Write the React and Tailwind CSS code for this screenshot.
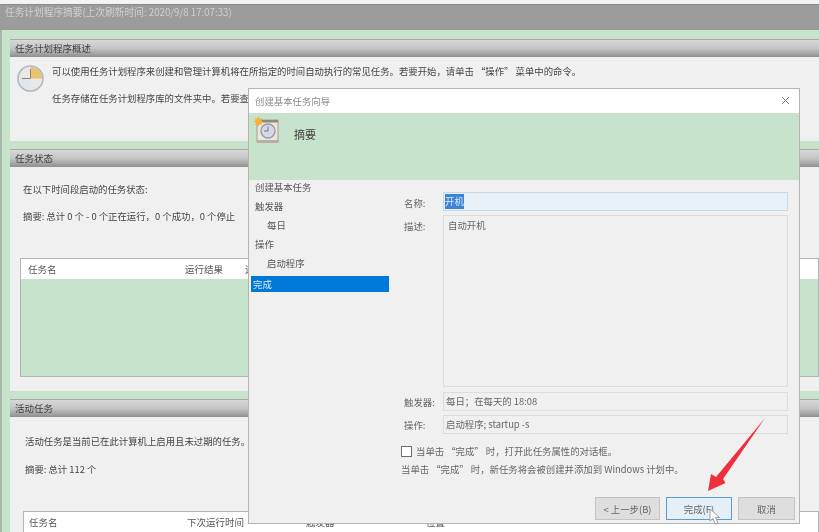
const F = { fontFamily: '"Noto Sans CJK SC", "Liberation Sans", sans-serif' };

function SectionHeader({ children }) {
  return (
    <div className="h-[18px] shrink-0 flex items-center pl-[5px] text-[9.5px] leading-none text-[#3c3c3c] bg-gradient-to-b from-[#d8d8d8] via-[#c4c4c4] to-[#8f8f8f] border-t border-[#a8a8a8]">
      {children}
    </div>
  );
}

function Table({ cols, className, children }) {
  return (
    <div className={"border border-[#b4b4b4] flex flex-col " + className}>
      <div className="h-[20px] shrink-0 bg-white flex items-center text-[9.5px] text-[#555]">{cols}</div>
      {children}
    </div>
  );
}

function ClockIcon() {
  return (
    <svg width="27" height="27" viewBox="0 0 27 27" className="shrink-0 mt-[2px]">
      <circle cx="13.5" cy="13.500" r="12.5" fill="#e8e8e4" stroke="#b0b8bf" strokeWidth="1.6" />
      <path d="M13.5 13.5V2A11.500 11.500 0 0 1 25 13.5Z" fill="#ecc26c" />
      <path d="M13.5 13.5H2A11.500 11.500 0 0 0 13.5 25Z" fill="#dfe6ec" />
      <path d="M13.5 4v9.5H5" stroke="#8a867c" strokeWidth="1" fill="none" />
    </svg>
  );
}

function WizardIcon() {
  return (
    <svg width="26" height="27" viewBox="0 0 26 27" className="shrink-0">
      <rect x="3" y="3" width="21" height="22" fill="#ebe7da" stroke="#a29d8f" />
      <rect x="3" y="3" width="21" height="2.500" fill="#8f8a80" />
      <rect x="3" y="23" width="21" height="3" fill="#b5b0a5" />
      <circle cx="14" cy="14" r="7" fill="#d5d9e6" stroke="#9b9aa8" strokeWidth="1.4" />
      <path d="M14 9.5V14H10" stroke="#75737d" strokeWidth="1" fill="none" />
      <path d="M4.500 0V9M0 4.500H9M1.300 1.300L7.700 7.700M7.700 1.300L1.300 7.700" stroke="#f4a91f" strokeWidth="1.2" />
      <circle cx="4.5" cy="4.5" r="3" fill="#f6b526" />
    </svg>
  );
}

function Arrow() {
  return (
    <svg className="absolute left-[700px] top-[412px]" width="72" height="84" viewBox="0 0 72 84">
      <path d="M65 6 L23 67 L25.500 71 L8 79 L11 62 L16 65 Z" fill="#ee2f3c" />
    </svg>
  );
}

function Cursor() {
  return (
    <svg className="absolute left-[708px] top-[508px]" width="14" height="18" viewBox="0 0 14 18">
      <path d="M2 1V13L5 10.500L7.500 16L10 15L7.500 9.500H11.500Z" fill="#fff" stroke="#9c9c9c" strokeWidth="1" />
    </svg>
  );
}

function Btn({ children, active, w }) {
  return (
    <div
      className={
        "h-[23px] flex items-center justify-center text-[9.4px] text-[#666] border " +
        w + " " +
        (active ? "bg-[#e4eff8] border-[#5a9bd0]" : "bg-[#dedede] border-[#c4c4c4]")
      }
    >
      {children}
    </div>
  );
}

function Dialog() {
  const nav = [
    ["创建基本任务", "pl-[4px]"],
    ["触发器", "pl-[4px]"],
    ["每日", "pl-[16px]"],
    ["操作", "pl-[4px]"],
    ["启动程序", "pl-[16px]"],
  ];
  return (
    <div className="absolute left-[248px] top-[88px] w-[552px] h-[436px] flex flex-col bg-[#f0f0f0] border border-[#b4b4b4]">
      <div className="h-[24px] shrink-0 bg-white flex items-center justify-between pl-[6px] pr-[9px] text-[9.4px] text-[#8a8a8a]">
        <span>创建基本任务向导</span>
        <svg width="9" height="9" viewBox="0 0 9 9" className="-mt-[2px]"><path d="M1 1L8 8M8 1L1 8" stroke="#7a7a7a" strokeWidth="1" /></svg>
      </div>
      <div className="h-[67px] shrink-0 bg-[#c8e3cb] flex items-start pl-[5px] pt-[4px] gap-[14px]">
        <WizardIcon />
        <span className="text-[11px] text-[#444] mt-[9px]">摘要</span>
      </div>
      <div className="flex-1 flex min-h-0">
        <div className="w-[140px] shrink-0 -mt-[2px] text-[9.4px] text-[#555] pl-[2px]">
          {nav.map(([t, c]) => (
            <div key={t} className={"h-[19px] flex items-center " + c}>{t}</div>
          ))}
          <div className="h-[16px] mt-[3px] flex items-center pl-[2px] bg-[#0078d7] text-[#d8ecfb]">完成</div>
        </div>
        <div className="flex-1 pl-[15px] pr-[11px] pt-[12px] flex flex-col text-[9.4px] text-[#666]">
          <div className="flex gap-[17px]">
            <span className="w-[22px] pt-[4px] shrink-0 whitespace-nowrap">名称:</span>
            <div className="flex-1 h-[19px] bg-[#e9f1f8] border border-[#c5d9e8] flex items-center pl-[1px]">
              <span className="bg-[#3f83d8] text-[#d8ecfb] leading-[15px]">开机</span>
            </div>
          </div>
          <div className="flex gap-[17px] mt-[4px]">
            <span className="w-[22px] pt-[4px] shrink-0 whitespace-nowrap">描述:</span>
            <div className="flex-1 h-[172px] border border-[#dcdcdc] pl-[4px] pt-[2px]">自动开机</div>
          </div>
          <div className="flex gap-[7px] mt-[5px]">
            <span className="w-[32px] pt-[3px] shrink-0 whitespace-nowrap">触发器:</span>
            <div className="flex-1 h-[19px] border border-[#dcdcdc] pl-[2px] flex items-center">每日；在每天的 18:08</div>
          </div>
          <div className="flex gap-[17px] mt-[4px]">
            <span className="w-[22px] pt-[3px] shrink-0 whitespace-nowrap">操作:</span>
            <div className="flex-1 h-[19px] border border-[#dcdcdc] pl-[2px] flex items-center">启动程序; startup -s</div>
          </div>
          <div className="flex items-center gap-[4px] mt-[10px] -ml-[3px]">
            <div className="w-[11px] h-[11px] bg-white border border-[#6e6e6e]" />
            <span>当单击 “完成” 时，打开此任务属性的对话框。</span>
          </div>
          <div className="mt-[4px] -ml-[3px]">当单击 “完成” 时，新任务将会被创建并添加到 Windows 计划中。</div>
          <div className="flex justify-end gap-[6px] mt-[21px] -mr-[7px]">
            <Btn w="w-[65px]">&lt; 上一步(B)</Btn>
            <Btn w="w-[66px]" active>完成(F)</Btn>
            <Btn w="w-[57px]">取消</Btn>
          </div>
        </div>
      </div>
    </div>
  );
}

export default function App() {
  return (
    <div style={F} className="relative w-[819px] h-[532px] overflow-hidden bg-[#f3f3f3] blur-[0.5px]">
      <div className="pt-[4px] h-full flex flex-col">
        <div className="h-[26px] shrink-0 bg-[#9c9c9c] border-t border-[#8a8a8a] pl-[5px] text-[9.7px] text-[#d0d0d0] leading-[14px]">
          任务计划程序摘要(上次刷新时间: 2020/9/8 17:07:33)
        </div>
        <div className="flex-1 min-h-0 bg-[#c8e3cb] border-l-2 border-[#a8b8a8] pl-[8px] pt-[9px] flex flex-col overflow-hidden">
          <section className="h-[102px] shrink-0 bg-[#f0f0f0] flex flex-col">
            <SectionHeader>任务计划程序概述</SectionHeader>
            <div className="flex pl-[7px] pt-[6px] gap-[8px] text-[9.4px] text-[#444]">
              <ClockIcon />
              <div className="pt-[1px]">
                <p className="leading-[14px] whitespace-nowrap">可以使用任务计划程序来创建和管理计算机将在所指定的时间自动执行的常见任务。若要开始，请单击 “操作” 菜单中的命令。</p>
                <p className="leading-[14px] mt-[13px]">任务存储在任务计划程序库的文件夹中。若要查看</p>
              </div>
            </div>
          </section>
          <section className="h-[242px] shrink-0 mt-[8px] bg-[#f0f0f0] flex flex-col">
            <SectionHeader>任务状态</SectionHeader>
            <div className="pl-[13px] pt-[15px] text-[9.4px] text-[#444] leading-[14px]">
              <p>在以下时间段启动的任务状态:</p>
              <p className="mt-[13px]">摘要: 总计 0 个 - 0 个正在运行，0 个成功，0 个停止</p>
            </div>
            <Table
              className="ml-[10px] mt-[35px] h-[119px]"
              cols={
                <>
                  <span className="ml-[7px] w-[157px]">任务名</span>
                  <span className="w-[60px]">运行结果</span>
                  <span>运行开始</span>
                </>
              }
            >
              <div className="flex-1 bg-[#c8e3cb]" />
            </Table>
          </section>
          <section className="flex-1 mt-[8px] bg-[#f0f0f0] flex flex-col">
            <SectionHeader>活动任务</SectionHeader>
            <div className="pl-[15px] pt-[17px] text-[9.4px] text-[#444] leading-[14px]">
              <p>活动任务是当前已在此计算机上启用且未过期的任务。</p>
              <p className="mt-[14px]">摘要: 总计 112 个</p>
            </div>
            <Table
              className="ml-[13px] mt-[35px] h-[40px]"
              cols={
                <>
                  <span className="ml-[5px] w-[158px]">任务名</span>
                  <span className="w-[119px]">下次运行时间</span>
                  <span className="w-[120px]">触发器</span>
                  <span>位置</span>
                </>
              }
            />
          </section>
        </div>
      </div>
      <Dialog />
      <Arrow />
      <Cursor />
    </div>
  );
}
